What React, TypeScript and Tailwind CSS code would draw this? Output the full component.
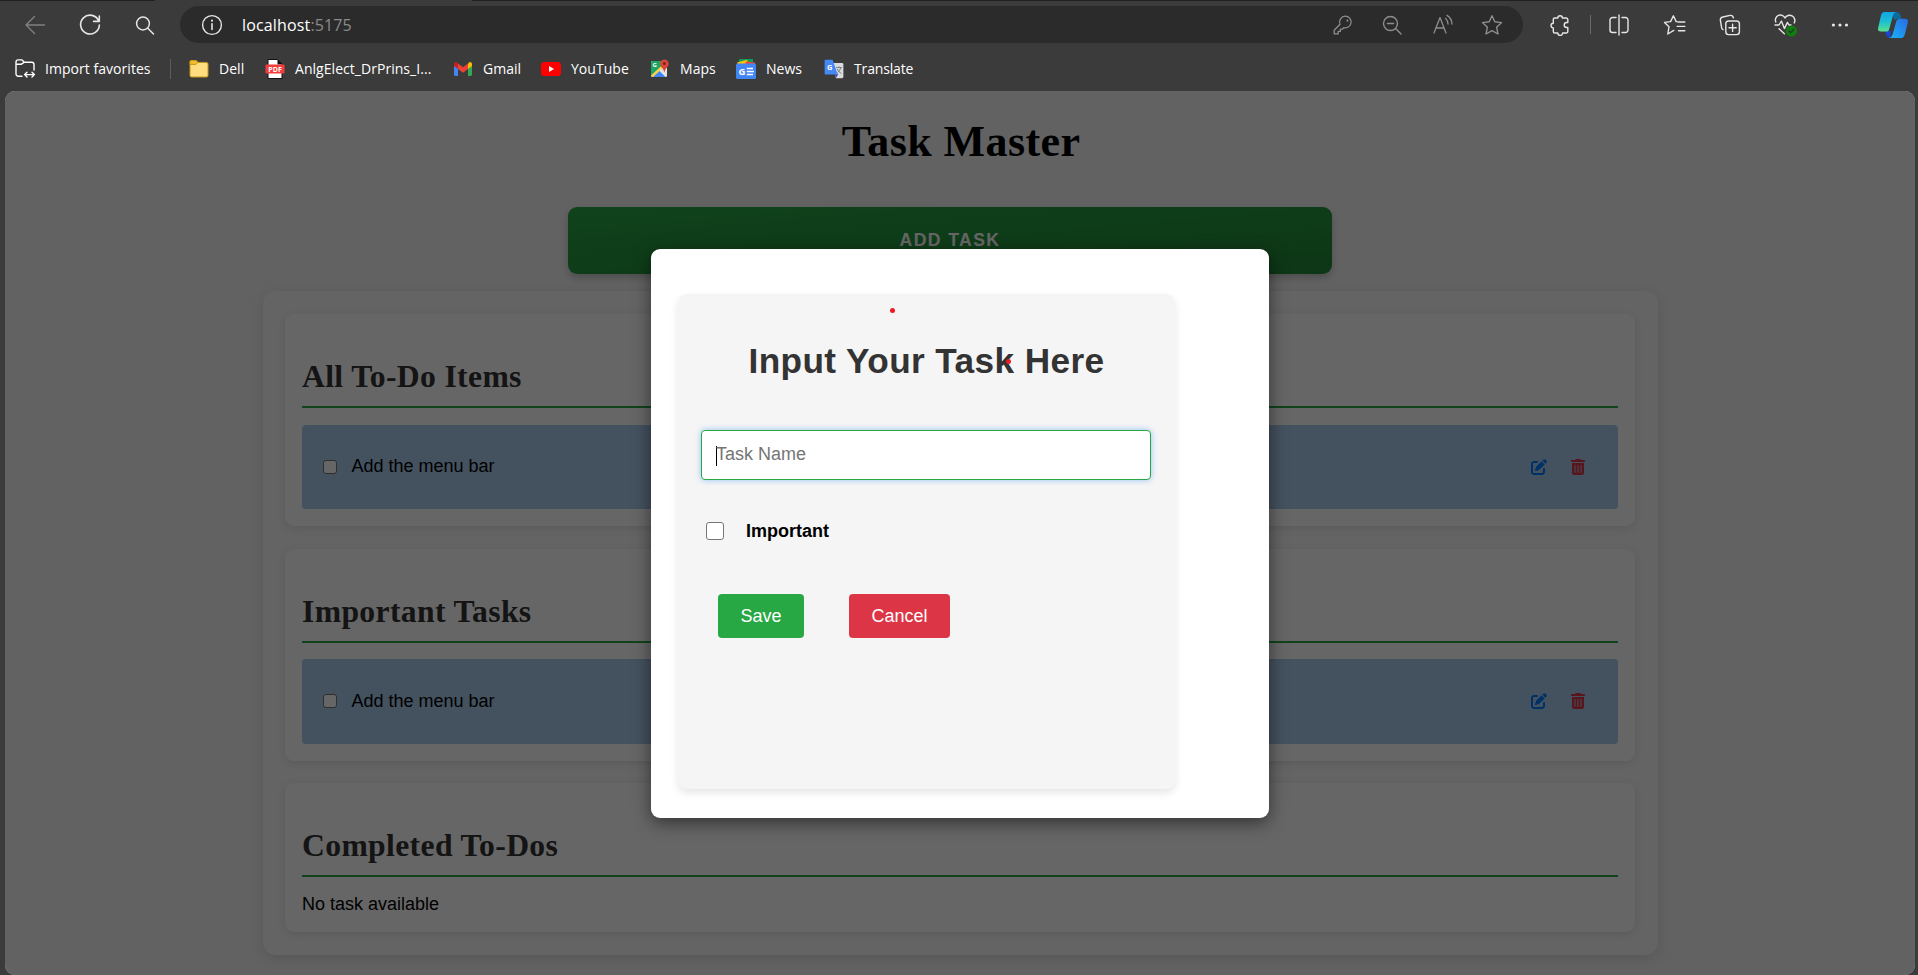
import type { ReactNode } from "react";
import { FaPenToSquare, FaTrashCan } from "react-icons/fa6";

function Icon({ className, children, box = "0 0 24 24" }: { className: string; children: ReactNode; box?: string }) {
  return (
    <svg
      viewBox={box}
      className={`shrink-0 ${className}`}
      fill="none"
      stroke="currentColor"
      strokeWidth="1.4"
      strokeLinecap="round"
      strokeLinejoin="round"
    >
      {children}
    </svg>
  );
}

function Toolbar() {
  return (
    <div className="flex h-[43px] items-center pt-[6px] text-[#e6e6e6]">
      <Icon className="ml-[23px] size-6 text-[#808080]">
        <path d="M3 12H21.5M11.5 3.5L3 12L11.5 20.5" />
      </Icon>
      <Icon className="ml-[31px] size-6">
        <path d="M20.7 8A9.4 9.4 0 1 0 21.4 12M21.3 3V8.4H15.6" strokeWidth="1.6" />
      </Icon>
      <Icon className="ml-[31px] size-6">
        <circle cx="10" cy="10.5" r="6.4" strokeWidth="1.5" />
        <path d="M14.8 15.3L20.5 21" strokeWidth="1.5" />
      </Icon>
      <div className="ml-[23px] flex h-[37px] w-[1343px] items-center rounded-full bg-[#2b2b2b]">
        <Icon className="ml-[20px] size-6">
          <circle cx="12" cy="12" r="9.4" />
          <path d="M12 10.8V16.5" strokeWidth="1.6" />
          <path d="M12 7.6V7.7" strokeWidth="2" />
        </Icon>
        <div className="ml-[18px] w-[200px] font-['Open_Sans','Noto_Sans',sans-serif] text-[16px] leading-6 tracking-[0.15px] whitespace-nowrap text-white">
          localhost<span className="text-[#8c8c8c]">:5175</span>
        </div>
        <div className="ml-auto flex items-center pr-[18px] text-[#8e8e8e]">
          <Icon className="size-6">
            <path d="M14.3 3.2A5.8 5.8 0 0 0 9 11.2L3.2 17.2V20.8H7.2V18.4H9.4V16.2H11.4L12.8 14.6A5.8 5.8 0 1 0 14.3 3.2Z" strokeWidth="1.3" />
            <path d="M16.4 7.6V7.7" strokeWidth="2" />
          </Icon>
          <Icon className="ml-[25px] size-6">
            <circle cx="10.5" cy="10.5" r="7" />
            <path d="M15.6 15.6L21 21M7.4 10.5H13.6" />
          </Icon>
          <Icon className="ml-[27px] size-6">
            <path d="M3 20L9 4.6L15 20M5.2 15H12.8M14.6 5.4Q16.8 7.6 17 11M16 2.4Q20.8 5.4 21 11" strokeWidth="1.3" />
          </Icon>
          <Icon className="mr-px ml-[25px] size-6">
            <path d="M12 2.8L14.8 8.8L21.6 9.6L16.6 14.2L18 21L12 17.6L6 21L7.4 14.2L2.4 9.6L9.2 8.8Z" />
          </Icon>
        </div>
      </div>
      <Icon className="ml-[25px] size-6">
        <path d="M6 5H9.8A2.3 2.3 0 0 1 14.4 5H18.2A1.6 1.6 0 0 1 19.8 6.6V9.5H18.7A2.5 2.5 0 0 0 18.7 14.5H19.8V18.4A1.6 1.6 0 0 1 18.2 20H14.6A2.4 2.4 0 0 1 9.8 20H6.9A1.6 1.6 0 0 1 5.3 18.4V14.9A2.3 2.3 0 0 1 5.3 10.3V6.6A1.6 1.6 0 0 1 6 5Z" />
      </Icon>
      <div className="ml-[18px] h-[19px] w-px bg-[#6a6a6a]" />
      <Icon className="ml-[16px] size-6">
        <path d="M12 2V22M9 4.5H5.5A2.5 2.5 0 0 0 3 7V17A2.5 2.5 0 0 0 5.5 19.5H9M15 4.5H18.5A2.5 2.5 0 0 1 21 7V17A2.5 2.5 0 0 1 18.5 19.5H15" />
      </Icon>
      <Icon className="ml-[32px] size-6">
        <path d="M17 9L13.2 8.6L10.4 2.8L7.6 8.6L1.5 9.4L6 13.8L4.8 21L10.8 17.4M15.5 9H21.8M14.2 13.4H21.8M15.5 17.8H21.8" />
      </Icon>
      <Icon className="ml-[31px] size-6">
        <rect x="7.8" y="8" width="13.6" height="13.6" rx="2.8" />
        <path d="M14.6 11.2V18.4M11 14.8H18.2M5 16.6A3 3 0 0 1 3.6 14.6L2.4 7.4A3 3 0 0 1 4.8 4L12 2.4A3 3 0 0 1 15.4 4.8" />
      </Icon>
      <Icon className="ml-[31px] size-6">
        <path d="M2.8 9A5 5 0 0 1 12 5A5.2 5.2 0 0 1 21.2 10M2 12H6L8.4 8L11.4 15.6L14.4 9.4L16 12H18M6 15.8L11.4 20.8" />
        <circle cx="18.4" cy="18" r="5.6" fill="#107c10" stroke="none" />
        <path d="M16 18L17.7 19.7L20.8 16.4" stroke="#2b2b2b" strokeWidth="1.1" />
      </Icon>
      <Icon className="ml-[31px] size-6">
        <g fill="currentColor" stroke="none">
          <circle cx="5.4" cy="12" r="1.6" />
          <circle cx="12" cy="12" r="1.6" />
          <circle cx="18.5" cy="12" r="1.6" />
        </g>
      </Icon>
      <svg viewBox="0 0 30 26" className="ml-[26px] h-[26px] w-[30px] shrink-0">
        <defs>
          <linearGradient id="leaf" x1="0" y1="0" x2="0" y2="1">
            <stop offset="0" stopColor="#12a4e8" />
            <stop offset=".5" stopColor="#1cc0d0" />
            <stop offset="1" stopColor="#5fe08c" />
          </linearGradient>
          <linearGradient id="wing" x1="0" y1="1" x2="1" y2="0">
            <stop offset="0" stopColor="#19b4fa" />
            <stop offset="1" stopColor="#2a6ae0" />
          </linearGradient>
        </defs>
        <path d="M14 0H18.5Q21.5 0 22.4 3L23.4 6.8H19.6Q17.2 6.8 16.6 9Z" fill="#0b6a9e" />
        <path d="M7 19H13L12 26Q9 25.6 8.2 22.8Z" fill="#1746d8" />
        <path d="M6.4 0H18.4Q15.8 .4 15 3.4L11.4 16.4Q10.6 19.6 8 19.6H3Q-.8 19.6 .2 15.6L3 3.4Q3.8 0 6.4 0Z" fill="url(#leaf)" />
        <path d="M21.6 6.8H27Q30.8 6.8 29.8 10.8L26.8 22.4Q25.8 26 22.8 26H10.8Q13.8 25.6 14.6 22.6L18 10.2Q18.8 6.8 21.6 6.8Z" fill="url(#wing)" />
      </svg>
    </div>
  );
}

function ImportIcon() {
  return (
    <Icon className="size-5" box="0 0 20 20">
      <path d="M7 17.2H3.2A2.2 2.2 0 0 1 1 15V3A2.2 2.2 0 0 1 3.2 .9H7L9.4 3.2H16.8A2.2 2.2 0 0 1 19 5.4V11M1 5.2H6.4L9.4 3.2M10 15.6H19M12 13.2L9.6 15.6L12 18M17 13.2L19.4 15.6L17 18" />
    </Icon>
  );
}

function FolderIcon() {
  return (
    <svg viewBox="0 0 20 20" className="size-5 shrink-0">
      <path d="M1 3Q1 1.5 2.5 1.5H7L9.2 3.4H17.5Q19 3.4 19 5V16.4Q19 18 17.5 18H2.5Q1 18 1 16.4Z" fill="#ffdd80" stroke="#c79518" />
      <path d="M1 3Q1 1.5 2.5 1.5H7L8.8 3.4L7 5.4H1Z" fill="#f5bd2c" stroke="#c79518" />
    </svg>
  );
}

function PdfIcon() {
  return (
    <svg viewBox="0 0 20 20" className="size-5 shrink-0">
      <path d="M3 .5H12.5L17 5V19.5H3Z" fill="#fff" stroke="#111" />
      <path d="M12.5 .5L17.4 5.4H12.5Z" fill="#111" />
      <rect x=".5" y="5.6" width="19" height="9" rx=".8" fill="#f33c3c" />
      <text x="10" y="12.8" textAnchor="middle" fontSize="7" fontWeight="700" fontFamily="Open Sans" fill="#fff">PDF</text>
    </svg>
  );
}

function GmailIcon() {
  return (
    <svg viewBox="0 0 18 14" className="h-[14px] w-[18px] shrink-0">
      <path d="M0 3V12.6Q0 14 1.4 14H4V6Z" fill="#4285f4" />
      <path d="M18 3V12.6Q18 14 16.6 14H14V6Z" fill="#34a853" />
      <path d="M14 1.6V7L18 4V2Q17.8 0 16 0Q15 0 14 1.6Z" fill="#fbbc04" />
      <path d="M0 2V4L4 7V1.6Q3 0 1.8 0Q0 .2 0 2Z" fill="#c5221f" />
      <path d="M4 7V1.5L9 5.2L14 1.5V7L9 10.8Z" fill="#ea4335" />
    </svg>
  );
}

function YouTubeIcon() {
  return (
    <svg viewBox="0 0 20 14" className="h-[14px] w-5 shrink-0">
      <rect width="20" height="14" rx="3.6" fill="#f00" />
      <path d="M8 4L13 7L8 10Z" fill="#fff" />
    </svg>
  );
}

function MapsIcon() {
  return (
    <svg viewBox="0 0 20 20" className="size-5 shrink-0">
      <rect x="1" y="2" width="16" height="16" rx="1.4" fill="#e8eaed" />
      <path d="M1 3.4Q1 2 2.4 2H12L12.5 6.5L1 17Z" fill="#1fa463" />
      <path d="M2.4 18L9 11.6L15.6 18Z" fill="#4285f4" />
      <path d="M1 16.5L12.5 6L14 8L3 18H2Z" fill="#ffd04b" />
      <path d="M9.8 10.8L17 17.8V12.6L14.6 9Z" fill="#dfe1e5" />
      <text x="4.8" y="8.2" textAnchor="middle" fontSize="6" fontWeight="700" fontFamily="Open Sans" fill="#fff">G</text>
      <path d="M14.4 .4A4.3 4.3 0 0 0 10.1 4.7C10.1 8 13.6 8.8 14.4 13.6C15.2 8.8 18.7 8 18.7 4.7A4.3 4.3 0 0 0 14.4 .4Z" fill="#db4437" />
      <circle cx="14.4" cy="4.6" r="1.5" fill="#7b231c" />
    </svg>
  );
}

function NewsIcon() {
  return (
    <svg viewBox="0 0 20 20" className="size-5 shrink-0">
      <path d="M3 0H17V6H3Z" fill="#0c9d58" />
      <path d="M1 3.4L11 .8L13 6H2Z" fill="#ffc107" />
      <path d="M10 2.4L19 3.6V6H9Z" fill="#f44336" />
      <rect y="4.6" width="20" height="15.4" rx="1.2" fill="#4285f4" />
      <text x="6" y="15.6" textAnchor="middle" fontSize="9.5" fontWeight="700" fontFamily="Open Sans" fill="#fff">G</text>
      <path d="M10.8 9.4H17M10.8 12.4H18M10.8 15.4H17" stroke="#fff" strokeWidth="1.5" />
    </svg>
  );
}

function TranslateIcon() {
  return (
    <svg viewBox="0 0 20 20" className="size-5 shrink-0">
      <path d="M8 4H18Q19.4 4 19.4 5.4V17.8Q19.4 19.2 18 19.2H12Z" fill="#dcdcdc" />
      <path d="M11 15H14.4L11.8 19.2Z" fill="#3451b8" />
      <path d="M1.8 .8H8.6L13.8 15.4H1.8Q.6 15.4 .6 14.2V2Q.6 .8 1.8 .8Z" fill="#4688f4" />
      <path d="M12 8.6H18M15 7.4V8.6M16.8 8.6Q16 12 13.6 13.6M13.2 10Q14.6 13 17.4 14.6" stroke="#6b7a80" strokeWidth=".9" fill="none" />
      <text x="5.6" y="10.6" textAnchor="middle" fontSize="7.5" fontWeight="700" fontFamily="Open Sans" fill="#fff">G</text>
    </svg>
  );
}

function Favorite({ className, icon, children }: { className: string; icon: ReactNode; children: ReactNode }) {
  return (
    <div className={`flex shrink-0 items-center whitespace-nowrap ${className}`}>
      <span className="mr-[10px] flex w-5 shrink-0 justify-center">{icon}</span>
      {children}
    </div>
  );
}

function FavoritesBar() {
  return (
    <div className="flex h-[48px] items-center pt-[3px] pl-[15px] font-['Open_Sans','Noto_Sans',sans-serif] text-[14px] tracking-[0.04px] text-white">
      <Favorite className="w-[155px]" icon={<ImportIcon />}>Import favorites</Favorite>
      <div className="h-5 w-px bg-[#5c5c5c]" />
      <Favorite className="ml-[18px] w-[76px]" icon={<FolderIcon />}>Dell</Favorite>
      <Favorite className="w-[188px]" icon={<PdfIcon />}>AnlgElect_DrPrins_I...</Favorite>
      <Favorite className="w-[88px]" icon={<GmailIcon />}>Gmail</Favorite>
      <Favorite className="w-[109px]" icon={<YouTubeIcon />}>YouTube</Favorite>
      <Favorite className="w-[86px]" icon={<MapsIcon />}>Maps</Favorite>
      <Favorite className="w-[88px]" icon={<NewsIcon />}>News</Favorite>
      <Favorite className="tracking-[-0.15px]" icon={<TranslateIcon />}>Translate</Favorite>
    </div>
  );
}

function Card({ title, className, children }: { title: string; className: string; children: ReactNode }) {
  return (
    <section className={`rounded-[9px] bg-white px-[17px] pt-[44px] shadow-[0_2px_9px_rgba(0,0,0,0.1)] ${className}`}>
      <h2 className="border-b-2 border-[#28a745] pb-[11px] font-['Liberation_Serif',serif] text-[31.68px] leading-[37px] font-bold tracking-[0.34px] text-[#333]">
        {title}
      </h2>
      {children}
    </section>
  );
}

function TaskRow({ className }: { className: string }) {
  return (
    <div className={`flex items-center rounded-[4px] bg-[#aacbee] pr-[32px] pb-px pl-[21px] ${className}`}>
      <span className="size-[14px] rounded-[3px] border border-[#767676] bg-white" />
      <span className="ml-[14.5px] pb-px leading-5">Add the menu bar</span>
      <FaPenToSquare className="ml-auto size-[16px] text-[#007bff]" />
      <FaTrashCan className="ml-[23px] size-[16px] text-[#dc3545]" />
    </div>
  );
}

function TaskPage() {
  return (
    <div className="h-full bg-[#f4f4f4] pt-px">
      <h1 className="mt-[25px] pl-[2px] text-center font-['Liberation_Serif',serif] text-[44px] leading-[50px] font-bold tracking-[0.4px]">Task Master</h1>
      <button className="mt-[40px] ml-[563px] flex h-[67px] w-[764px] items-center justify-center rounded-[9px] bg-linear-to-br from-[#28a745] to-[#218838] pb-px text-[17.6px] font-bold tracking-[1.4px] text-white shadow-[0_4px_7px_rgba(0,0,0,0.2)]">
        ADD TASK
      </button>
      <main className="mt-[17px] ml-[258px] h-[664px] w-[1395px] rounded-[13px] bg-[#f9f9f9] pt-[23px] pr-[23px] pl-[22px] shadow-[0_4px_13px_rgba(0,0,0,0.1)]">
        <Card title="All To-Do Items" className="h-[212px]">
          <TaskRow className="mt-[17px] h-[84px]" />
        </Card>
        <Card title="Important Tasks" className="mt-[23px] h-[212px]">
          <TaskRow className="mt-[16px] h-[85px]" />
        </Card>
        <Card title="Completed To-Dos" className="mt-[22px] h-[149px]">
          <p className="mt-[17px] leading-5">No task available</p>
        </Card>
      </main>
    </div>
  );
}

function TaskDialog() {
  return (
    <div className="relative h-[569px] w-[618px] rounded-[9px] bg-white pt-[45px] pl-[27px] shadow-[0_5px_17px_rgba(0,0,0,0.5)]">
      <form className="h-[495px] w-[497px] rounded-[9px] bg-[#f5f5f5] px-[23px] pt-[46px] shadow-[0_4px_9px_rgba(0,0,0,0.1)]">
        <h2 className="text-center text-[35.2px] leading-[42px] font-bold tracking-[0.4px] whitespace-nowrap text-[#333]">Input Your Task Here</h2>
        <div className="mt-[48px] flex h-[50px] w-[450px] items-center rounded-[4px] border border-[#28a745] bg-white pb-[2px] pl-[14px] shadow-[0_0_6px_rgba(0,123,255,0.4)]">
          <span className="mt-[3px] -mr-px h-5 w-px bg-black" />
          <span className="text-[#757575]">Task Name</span>
        </div>
        <label className="mt-[41px] flex h-5 items-center pl-[5px] font-bold">
          <span className="size-[18px] rounded-[3px] border border-[#767676] bg-white" />
          <span className="ml-[22px]">Important</span>
        </label>
        <div className="mt-[53px] flex gap-[45px] pl-[17px] text-white">
          <button type="button" className="h-[44px] w-[86px] rounded-[4px] bg-[#28a745]">Save</button>
          <button type="button" className="h-[44px] w-[101px] rounded-[4px] bg-[#dc3545]">Cancel</button>
        </div>
      </form>
      <span className="absolute top-[59px] left-[239px] size-[5px] rounded-full bg-[#ed1c24]" />
      <span className="absolute top-[110px] left-[355px] size-[5px] rounded-full bg-[#ed1c24]" />
    </div>
  );
}

export default function App() {
  return (
    <div className="h-[975px] w-[1918px] overflow-hidden bg-[#3b3b3b]">
      <div className="relative h-[91px]">
        <div className="absolute inset-x-0 top-0 flex h-px justify-between">
          <span className="w-[155px] bg-[#202020]" />
          <span className="w-[1446px] bg-[#202020]" />
        </div>
        <Toolbar />
        <FavoritesBar />
      </div>
      <div className="relative ml-[5px] h-[884px] w-[1910px] overflow-hidden rounded-[10px] font-['Liberation_Sans',sans-serif] text-[18px] text-black">
        <TaskPage />
        <div className="absolute inset-0 flex items-start justify-center bg-black/60 pt-[158px]">
          <TaskDialog />
        </div>
      </div>
    </div>
  );
}
